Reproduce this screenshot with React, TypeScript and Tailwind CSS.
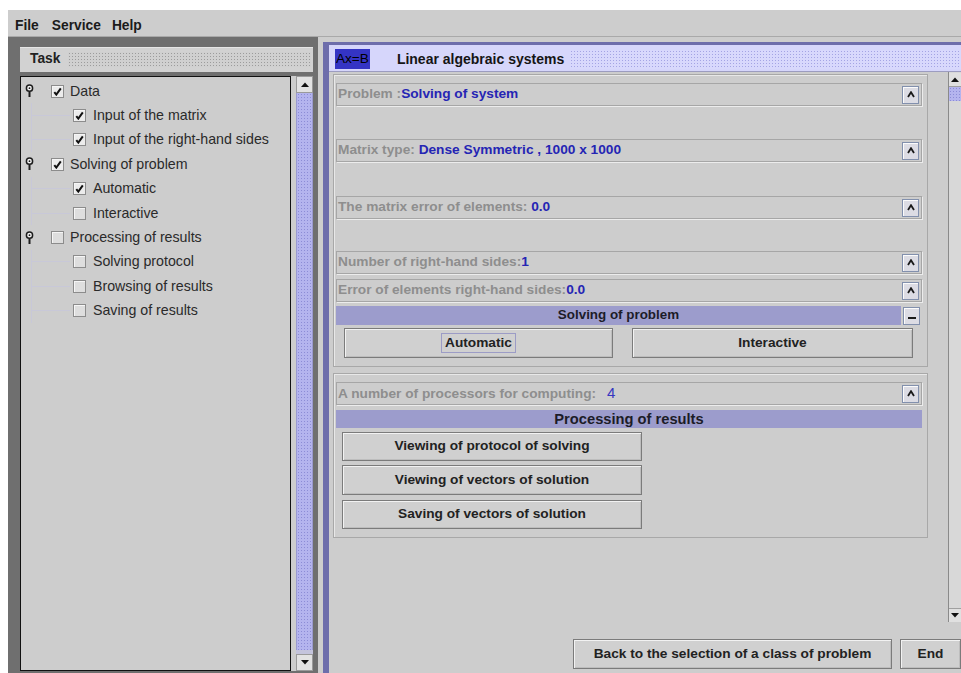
import type { ReactNode } from 'react'

const dotsGray = "bg-[#d0d0d0] bg-[radial-gradient(circle,#9c9c9c_0.7px,transparent_1px)] [background-size:3px_3px]"
const dotsPurple = "bg-[#d8d8fc] bg-[radial-gradient(circle,#a4a4e4_0.7px,transparent_1px)] [background-size:3px_3px]"
const dotsThumb = "bg-[#b4b4ee] bg-[radial-gradient(circle,#8c8cd6_0.8px,transparent_1px)] [background-size:3px_3px]"

function Pin() {
  return (
    <svg width="9" height="14" viewBox="0 0 9 14">
      <circle cx="4.5" cy="4.2" r="3.1" fill="#f4f4f4" stroke="#1c1c1c" strokeWidth="1.5" />
      <circle cx="4.5" cy="4.2" r="0.9" fill="#1c1c1c" />
      <line x1="4.5" y1="7.5" x2="4.5" y2="13" stroke="#1c1c1c" strokeWidth="2" />
    </svg>
  )
}

function Check({ on }: { on?: boolean }) {
  return (
    <span className={`flex h-[13px] w-[13px] shrink-0 items-center justify-center border border-[#8c8c8c] ${on ? 'bg-[#ececec]' : 'bg-[#dedede]'} shadow-[inset_1px_1px_0_#f6f6f6]`}>
      {on && (
        <svg width="9" height="9" viewBox="0 0 9 9">
          <path d="M1.3 5.2 L3.3 7.6 L7.8 1.4" fill="none" stroke="#111" strokeWidth="2" />
        </svg>
      )}
    </span>
  )
}

function Arrow({ up }: { up?: boolean }) {
  return (
    <svg width="8" height="5" viewBox="0 0 8 5">
      <path d={up ? 'M0 5 L4 0.5 L8 5 Z' : 'M0 0 L4 4.5 L8 0 Z'} fill="#111" />
    </svg>
  )
}

function TreeGroup({ label, on, items }: { label: string; on?: boolean; items: [string, boolean][] }) {
  return (
    <div>
      <div className="flex h-[24.4px] items-center">
        <span className="ml-[4px] flex w-[9px]"><Pin /></span>
        <span className="ml-[17px]"><Check on={on} /></span>
        <span className="ml-[6px]">{label}</span>
      </div>
      <div className="ml-[10px] border-l border-[#c8c8d8]">
        {items.map(([t, c]) => (
          <div key={t} className="flex h-[24.4px] items-center">
            <span className="h-px w-[38px] bg-[#c8c8d8]" />
            <span className="ml-[3px]"><Check on={c} /></span>
            <span className="ml-[7px]">{t}</span>
          </div>
        ))}
      </div>
    </div>
  )
}

function SmallBtn({ children }: { children: ReactNode }) {
  return (
    <span className="mr-[2px] flex h-[18px] w-[17px] shrink-0 items-center justify-center border border-[#8290ad] bg-[#dcdce4] shadow-[inset_1px_1px_0_#fbfbfb]">
      {children}
    </span>
  )
}

const caret = (
  <svg width="8" height="7" viewBox="0 0 8 7">
    <path d="M1 6 L4 1.2 L7 6" fill="none" stroke="#1a1a1a" strokeWidth="1.8" />
  </svg>
)

function Field({ label, value, className = '' }: { label: string; value: ReactNode; className?: string }) {
  return (
    <div className={`flex h-[23px] items-center border border-[#a6a6a6] shadow-[1px_1px_0_#ececec] ${className}`}>
      <div className="flex-1 pl-[1px] text-[13.7px] font-bold text-[#8e8e8e]">
        {label}
        {value}
      </div>
      <SmallBtn>{caret}</SmallBtn>
    </div>
  )
}

const blue = (t: string) => <span className="text-[#2525b4]">{t}</span>

function Btn({ children, className = '' }: { children: ReactNode; className?: string }) {
  return (
    <div className={`flex items-center justify-center border border-[#7b7b7b] bg-[#d0d0d0] text-[13.7px] font-bold text-[#222] shadow-[inset_1px_1px_0_#f2f2f2,inset_-1px_-1px_0_#bdbdbd] ${className}`}>
      {children}
    </div>
  )
}

export default function App() {
  return (
    <div className="h-[673px] w-[961px] overflow-hidden bg-white pl-2 pt-[10px] font-['Liberation_Sans',Arial,sans-serif]">
      <div className="flex h-full flex-col bg-[#cdcdcd]">
        {/* menu bar */}
        <div className="flex h-[27px] shrink-0 items-center border-b border-[#a9a9a9] pl-[7px] pt-[6px] text-[13.8px] font-bold text-[#1b1b1b]">
          <span>File</span>
          <span className="ml-[13px]">Service</span>
          <span className="ml-[11px]">Help</span>
        </div>

        <div className="flex min-h-0 flex-1">
          {/* task tree */}
          <div className="flex w-[310px] shrink-0 flex-col bg-[#6f6f6f] pb-[2px] pl-3 pr-[5px] pt-[10px]">
            <div className="flex h-[25px] shrink-0 items-center bg-[#d2d2d2] pl-[10px] pr-[2px] shadow-[inset_0_1px_0_#e6e6e6]">
              <span className="text-[13.8px] font-bold text-[#222]">Task</span>
              <span className={`ml-[8px] h-[15px] flex-1 ${dotsGray}`} />
            </div>
            <div className="mt-[4px] flex min-h-0 flex-1 bg-[#cdcdcd]">
              <div className="w-[271px] border border-[#111] pt-[2px] text-[14.2px] text-[#2a2a2a]">
                <TreeGroup label="Data" on items={[['Input of the matrix', true], ['Input of the right-hand sides', true]]} />
                <TreeGroup label="Solving of problem" on items={[['Automatic', true], ['Interactive', false]]} />
                <TreeGroup label="Processing of results" items={[['Solving protocol', false], ['Browsing of results', false], ['Saving of results', false]]} />
              </div>
              <div className="ml-[5px] flex w-[17px] flex-col">
                <div className="flex h-[17px] items-center justify-center border border-[#9a9a9a] bg-[#e2e2e2]"><Arrow up /></div>
                <div className={`flex-1 border-x border-[#9a9ad0] ${dotsThumb}`} />
                <div className="h-[4px] bg-[#c4c4dc]" />
                <div className="flex h-[17px] items-center justify-center border border-[#9a9a9a] bg-[#e2e2e2]"><Arrow /></div>
              </div>
            </div>
          </div>

          <div className="w-[5px] shrink-0" />

          {/* problem frame */}
          <div className="mt-[5px] flex min-w-0 flex-1 flex-col border-l-[6px] border-t-[3px] border-[#6d6dab]">
            <div className="flex h-[27px] shrink-0 items-center border-b border-[#9c9cc0] bg-[#d6d6fb] pl-[6px] pt-[2px]">
              <span className="flex h-[20px] items-center bg-[#3434c4] px-[1px] text-[13.6px] text-black">Ax=B</span>
              <span className="ml-[27px] text-[14px] font-bold text-[#151515]">Linear algebraic systems</span>
              <span className={`ml-[6px] h-[19px] flex-1 ${dotsPurple}`} />
            </div>

            <div className="flex h-[550px] shrink-0">
              <div className="flex-1 pl-[4px] pr-[20px] pt-[2px]">
                <div className="flex flex-col border border-[#a8a8a8] pb-[8px] pl-[2px] pr-[5px] pt-[8px] shadow-[inset_1px_1px_0_#e8e8e8]">
                  <Field label="Problem :" value={blue('Solving of system')} />
                  <Field className="mt-[33px]" label="Matrix type: " value={blue('Dense Symmetric , 1000 x 1000')} />
                  <Field className="mt-[34px]" label="The matrix error of elements: " value={blue('0.0')} />
                  <Field className="mt-[32px]" label="Number of right-hand sides:" value={blue('1')} />
                  <Field className="mt-[5px]" label="Error of elements right-hand sides:" value={blue('0.0')} />
                  <div className="mt-[4px] flex h-[19px] items-center">
                    <div className="flex h-full flex-1 items-center justify-center bg-[#9c9ccc] text-[13.4px] font-bold text-[#1c1c28]">Solving of problem</div>
                    <span className="ml-[2px]" />
                    <SmallBtn>
                      <span className="mt-[5px] h-[2px] w-[8px] bg-[#1a1a1a]" />
                    </SmallBtn>
                  </div>
                  <div className="mt-[3px] flex">
                    <Btn className="ml-[8px] h-[30px] w-[269px]">
                      <span className="border border-[#9c9cc6] px-[3px] leading-[18px]">Automatic</span>
                    </Btn>
                    <Btn className="ml-[19px] h-[30px] w-[281px]">Interactive</Btn>
                  </div>
                </div>

                <div className="mt-[6px] flex flex-col border border-[#a8a8a8] pb-[8px] pl-[2px] pr-[5px] pt-[8px] shadow-[inset_1px_1px_0_#e8e8e8]">
                  <Field
                    label="A number of processors for computing:"
                    value={<span className="ml-[11px] text-[15px] font-normal text-[#3636c0]">4</span>}
                  />
                  <div className="mt-[5px] flex h-[18px] items-center justify-center bg-[#9c9ccc] text-[14.7px] font-bold text-[#1c1c28]">Processing of results</div>
                  <Btn className="ml-[6px] mt-[4px] h-[29px] w-[300px]">Viewing of protocol of solving</Btn>
                  <Btn className="ml-[6px] mt-[4px] h-[30px] w-[300px]">Viewing of vectors of solution</Btn>
                  <Btn className="ml-[6px] mt-[5px] h-[29px] w-[300px]">Saving of vectors of solution</Btn>
                </div>
              </div>

              <div className="flex w-[13px] shrink-0 flex-col border-l border-[#8a8a8a] bg-[#d8d8d8] pt-[1px]">
                <div className="flex h-[14px] items-center border-b border-[#a0a0a0] bg-[#e0e0e0] pl-[2px]"><Arrow up /></div>
                <div className={`h-[14px] ${dotsThumb}`} />
                <div className="flex-1" />
                <div className="flex h-[14px] items-center border-t border-[#a0a0a0] bg-[#e0e0e0] pl-[2px]"><Arrow /></div>
              </div>
            </div>

            <div className="flex flex-1 items-start justify-end gap-[8px] pt-[17px]">
              <Btn className="h-[30px] w-[319px]">Back to the selection of a class of problem</Btn>
              <Btn className="h-[30px] w-[61px]">End</Btn>
            </div>
          </div>
        </div>
      </div>
    </div>
  )
}
